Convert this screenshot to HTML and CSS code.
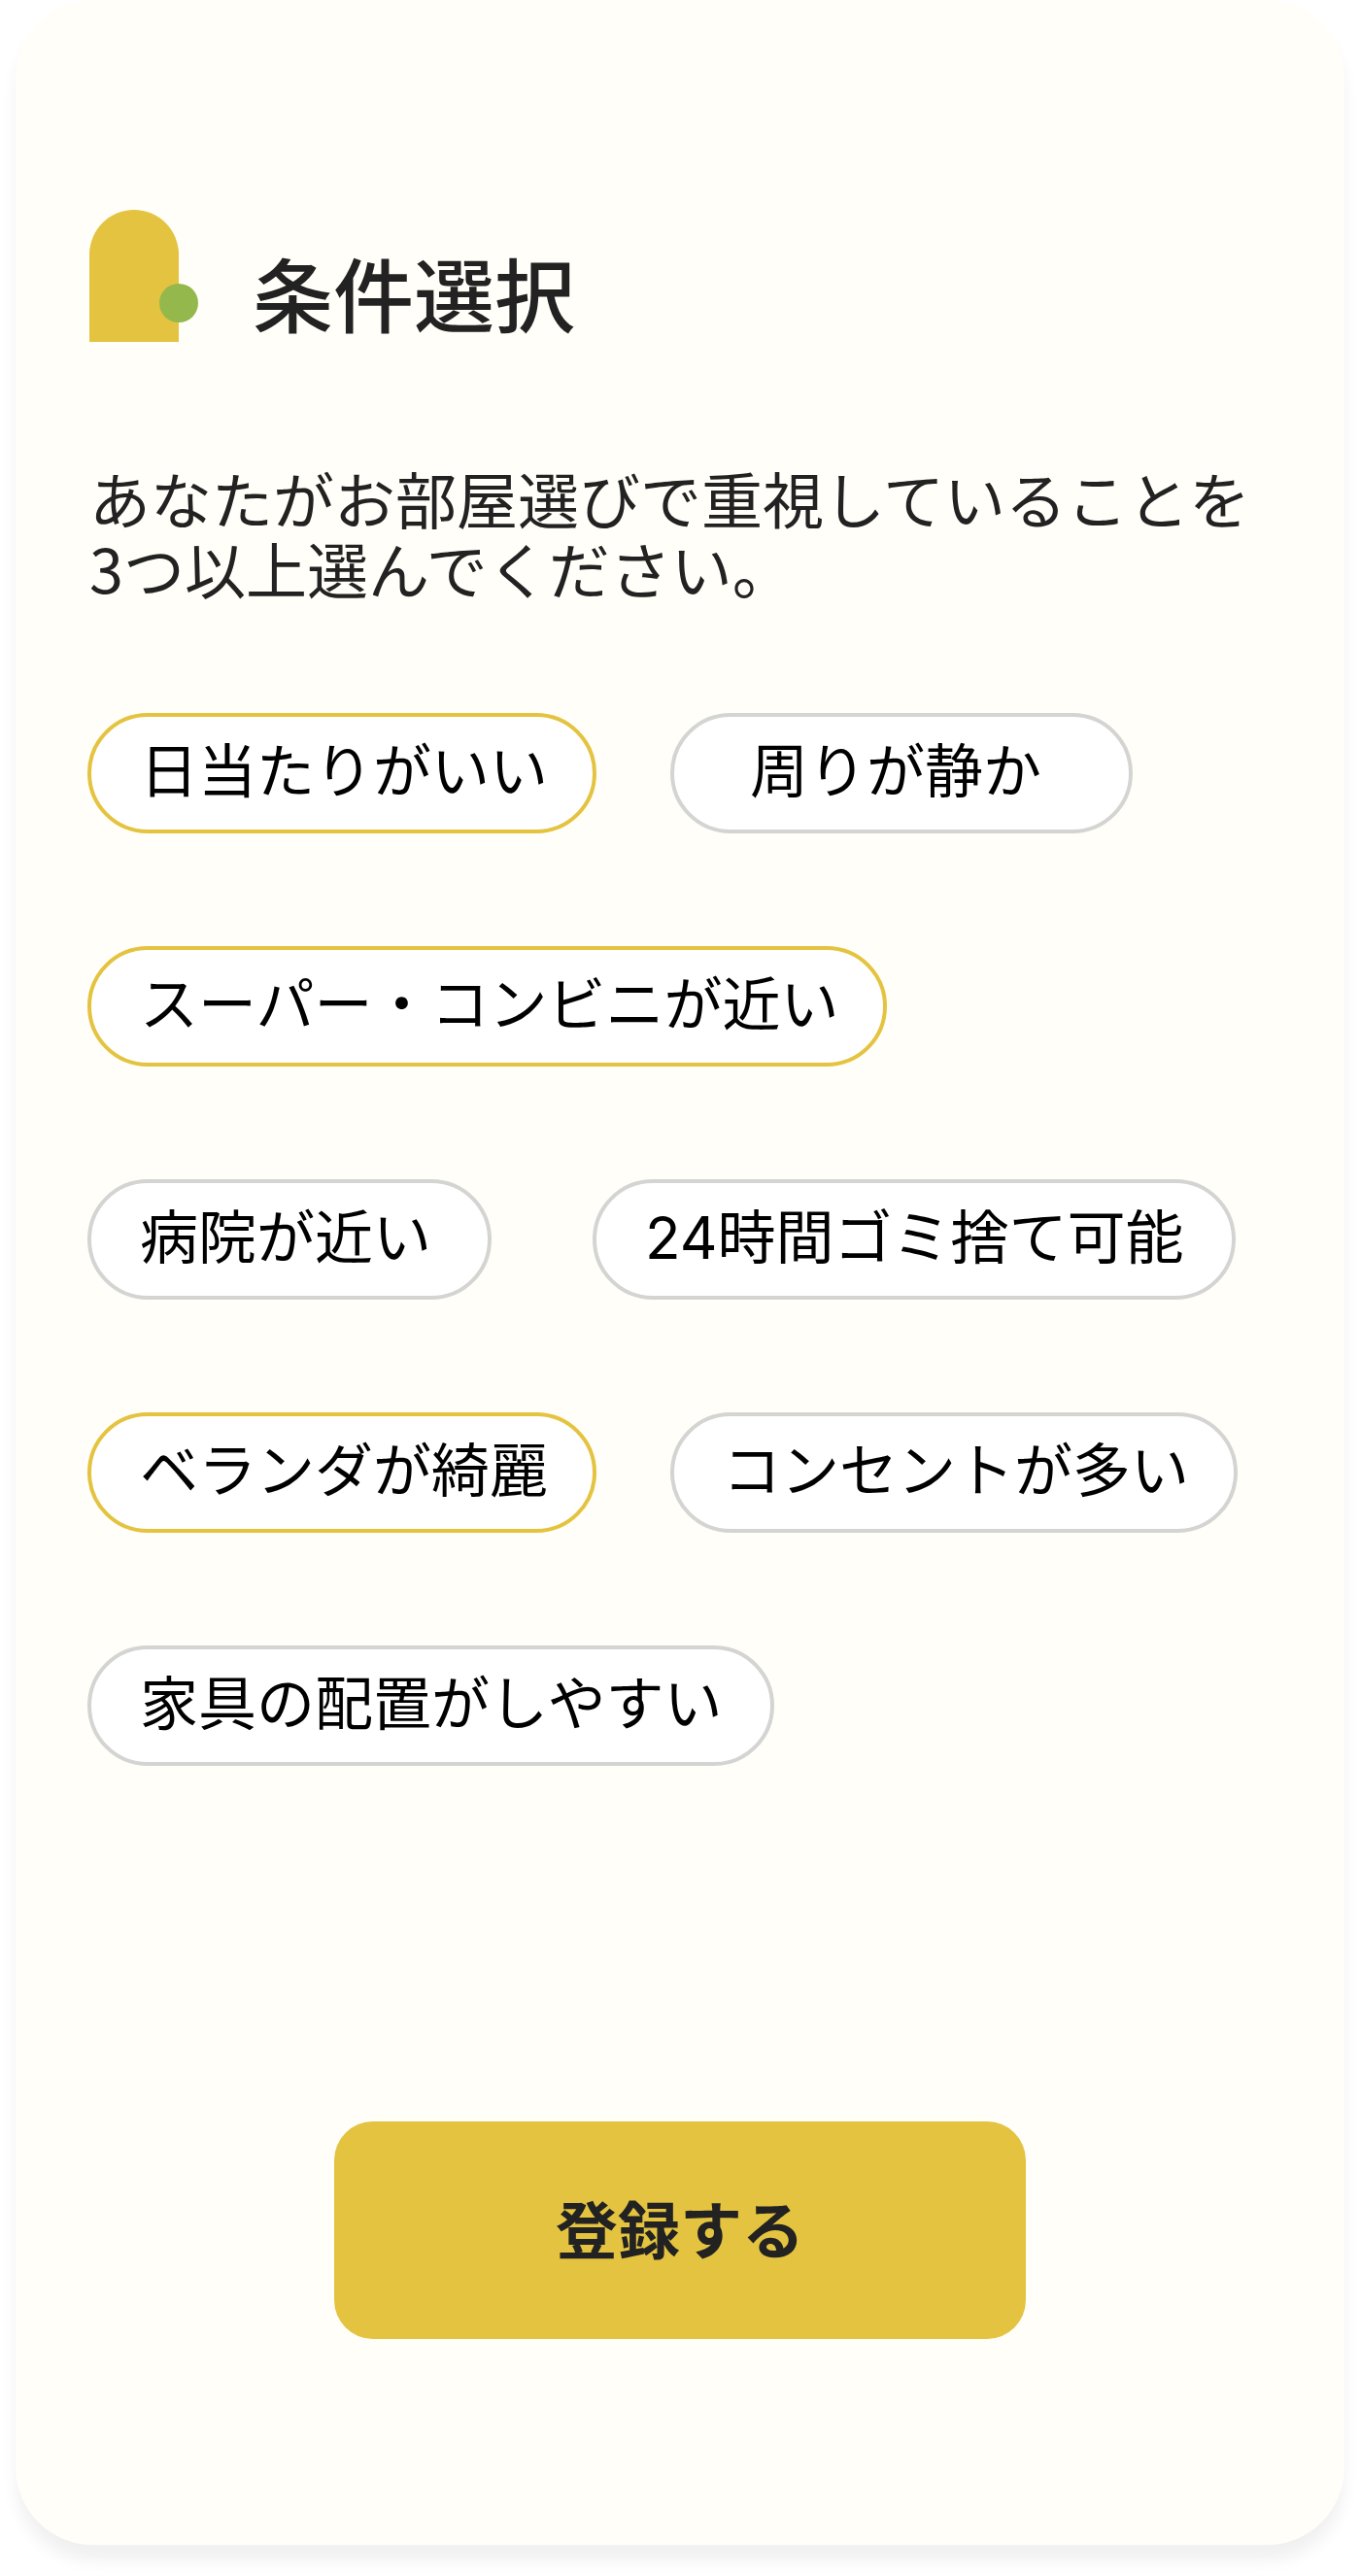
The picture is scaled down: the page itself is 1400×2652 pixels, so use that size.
FILE: index.html
```html
<!DOCTYPE html>
<html lang="ja">
<head>
<meta charset="utf-8">
<meta name="viewport" content="width=device-width, initial-scale=1">
<title>条件選択</title>
<link rel="stylesheet" href="styles.css">
</head>
<body>
<main class="card">
  <header class="header">
    <svg class="logo" width="112" height="136" viewBox="0 0 112 136" aria-hidden="true">
      <path fill="#e4c340" d="M0 136V46a46 46 0 0 1 92 0v90z"/>
      <circle fill="#94b84c" cx="92" cy="96" r="20"/>
    </svg>
    <h1 class="title">条件選択</h1>
  </header>
  <form class="form">
    <p class="lead">あなたがお部屋選びで重視していることを<br>3つ以上選んでください。</p>
    <div class="rows">
      <div class="row">
        <label class="chip"><input type="checkbox" name="sunny" checked>日当たりがいい</label>
        <label class="chip chip-wide"><input type="checkbox" name="quiet">周りが静か</label>
      </div>
      <div class="row">
        <label class="chip"><input type="checkbox" name="shops" checked>スーパー・コンビニが近い</label>
      </div>
      <div class="row row-loose">
        <label class="chip chip-roomy"><input type="checkbox" name="hospital">病院が近い</label>
        <label class="chip chip-even"><input type="checkbox" name="garbage">24時間ゴミ捨て可能</label>
      </div>
      <div class="row">
        <label class="chip"><input type="checkbox" name="veranda" checked>ベランダが綺麗</label>
        <label class="chip"><input type="checkbox" name="outlets">コンセントが多い</label>
      </div>
      <div class="row">
        <label class="chip chip-even"><input type="checkbox" name="furniture">家具の配置がしやすい</label>
      </div>
    </div>
    <button class="submit" type="submit">登録する</button>
  </form>
</main>
</body>
</html>
```
FILE: styles.css
```css
* {
  box-sizing: border-box;
}

body {
  margin: 0;
  background: #fff;
  color: #222;
  font-family: "Noto Sans CJK JP", sans-serif;
}

.card {
  margin: 0 16px 32px;
  padding: 216px 74px 212px;
  border-radius: 80px;
  background: #fffef8;
  box-shadow: 0 16px 16px rgba(0, 0, 0, 0.06);
}

.header {
  display: flex;
  align-items: flex-end;
  gap: 56px;
  padding-left: 2px;
}

.logo {
  display: block;
  flex: none;
}

.title {
  margin: 0 0 4px;
  font-size: 83px;
  font-weight: 500;
  line-height: 96px;
}

.form {
  display: flex;
  flex-direction: column;
}

.lead {
  margin: 124px 0 0;
  padding-left: 2px;
  font-size: 63px;
  line-height: 72px;
}

.rows {
  display: flex;
  flex-direction: column;
  gap: 116px;
  margin-top: 114px;
}

.row {
  display: flex;
  flex-wrap: wrap;
  gap: 76px;
}

.row-loose {
  gap: 104px;
}

.chip {
  height: 124px;
  padding: 0 46px 0 50px;
  border: 4px solid #d4d4d2;
  border-radius: 62px;
  background: #fff;
  color: #000;
  font-family: Inter, "Noto Sans CJK JP", sans-serif;
  font-size: 60px;
  line-height: 112px;
  cursor: pointer;
}

.chip:has(input:checked) {
  border-color: #e4c340;
}

.chip:has(input:focus-visible) {
  outline: 4px solid #94b84c;
}

.chip input {
  position: absolute;
  opacity: 0;
  pointer-events: none;
}

.chip-wide {
  padding: 0 90px 0 78px;
}

.chip-roomy {
  padding-right: 58px;
}

.chip-even {
  padding-right: 50px;
}

.submit {
  align-self: center;
  width: 712px;
  max-width: 100%;
  margin-top: 366px;
  padding: 60px 32px 68px;
  border: 0;
  border-radius: 40px;
  background: #e4c340;
  color: #222;
  font-family: inherit;
  font-size: 64px;
  font-weight: 700;
  line-height: 96px;
  cursor: pointer;
}
```
